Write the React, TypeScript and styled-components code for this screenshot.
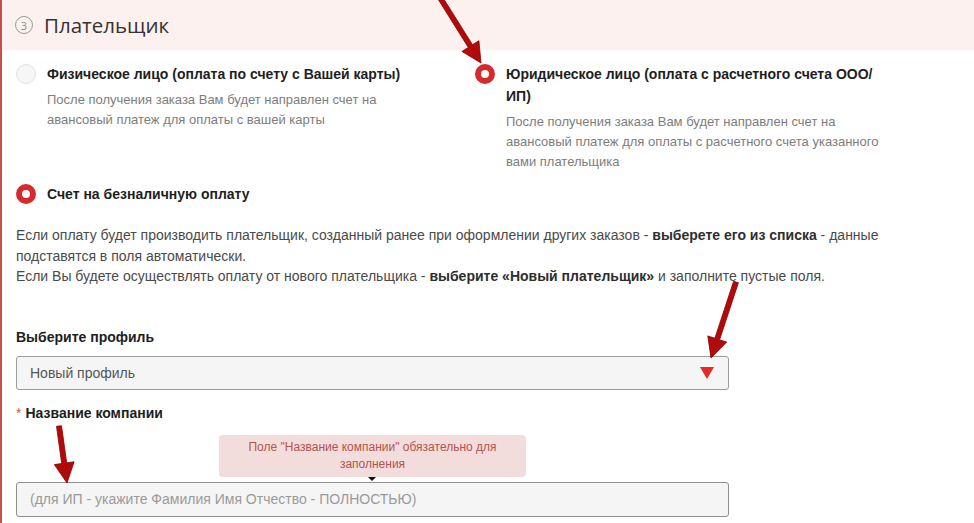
import styled, { createGlobalStyle } from 'styled-components';

const GlobalStyle = createGlobalStyle`
  * { box-sizing: border-box; }
  body {
    margin: 0;
    background: #fff;
    font-family: "Liberation Sans", Arial, sans-serif;
  }
`;

const Page = styled.div`
  position: relative;
  min-height: 523px;
  border-left: 2px solid #c4524c;
  overflow: hidden;
`;

const Header = styled.div`
  height: 50px;
  background-color: #fdf1f0;
  display: flex;
  align-items: center;
  gap: 11px;
  padding-left: 13px;
`;

const StepNumber = styled.span`
  width: 18px;
  height: 18px;
  border: 1.5px solid #9a9a9a;
  border-radius: 50%;
  display: flex;
  align-items: center;
  justify-content: center;
  font-family: "Open Sans", sans-serif;
  font-size: 11px;
  color: #8c8c8c;
  line-height: 1;
`;

const Title = styled.h2`
  margin: 0;
  font-family: "Open Sans", sans-serif;
  font-weight: 400;
  font-size: 20.5px;
  color: #333;
`;

const Content = styled.div`
  padding: 13px 14px 0 14px;
`;

const Options = styled.div`
  display: grid;
  grid-template-columns: 459px 1fr;
`;

const Option = styled.div`
  display: flex;
  align-items: flex-start;
  gap: 11px;
`;

const Radio = styled.span<{ $checked?: boolean }>`
  flex: none;
  width: 20px;
  height: 20px;
  margin-top: 1px;
  border-radius: 50%;
  background: ${(p) => (p.$checked ? '#fff' : '#f6f6f6')};
  border: ${(p) => (p.$checked ? '6px solid #d52a2e' : '1px solid #e2e2e2')};
`;

const OptionText = styled.div`
  max-width: 385px;
`;

const OptionLabel = styled.div`
  font-size: 14px;
  font-weight: 700;
  line-height: 22px;
  color: #1e1e1e;
`;

const OptionHint = styled.div`
  margin-top: 5px;
  font-size: 13px;
  line-height: 20px;
  color: #7d7d7d;
`;

const BillingOption = styled(Option)`
  margin-top: 11px;
`;

const Info = styled.p`
  margin: 20px 0 0;
  font-size: 14px;
  line-height: 20.5px;
  color: #4a4a4a;

  b {
    color: #2e2e2e;
  }
`;

const FieldLabel = styled.div<{ $gap: number }>`
  margin-top: ${(p) => p.$gap}px;
  font-size: 14px;
  font-weight: 700;
  line-height: 20px;
  color: #1e1e1e;
`;

const Required = styled.span`
  color: #d9534f;
  font-weight: 400;
  margin-right: 4px;
`;

const Select = styled.div`
  margin-top: 9px;
  width: 713px;
  height: 34px;
  border: 1px solid #9c9c9c;
  border-radius: 3px;
  background: #f5f5f5;
  display: flex;
  align-items: center;
  justify-content: space-between;
  padding: 0 14px 0 13px;
  font-size: 14px;
  color: #555;
`;

const Caret = styled.span`
  width: 0;
  height: 0;
  border-left: 7px solid transparent;
  border-right: 7px solid transparent;
  border-top: 12px solid #e32a2a;
`;

const TooltipRow = styled.div`
  width: 713px;
  margin-top: 12px;
  display: flex;
  justify-content: center;
`;

const Tooltip = styled.div`
  position: relative;
  width: 307px;
  height: 42px;
  background: #f3dcdc;
  border-radius: 4px;
  padding-top: 4px;
  font-size: 12px;
  line-height: 17px;
  color: #b5534f;
  text-align: center;

  &::after {
    content: '';
    position: absolute;
    left: 149px;
    bottom: -4px;
    border-left: 4px solid transparent;
    border-right: 4px solid transparent;
    border-top: 4px solid #111;
  }
`;

const Input = styled.div`
  margin-top: 5px;
  width: 713px;
  height: 35px;
  border: 1px solid #8e8e8e;
  border-radius: 3px;
  background: #f5f5f5;
  display: flex;
  align-items: center;
  padding-left: 13px;
  font-size: 14px;
  color: #9a9a9a;
`;

const Annotations = styled.svg`
  position: absolute;
  inset: 0;
  width: 100%;
  height: 100%;
  pointer-events: none;
`;

function arrowPath(x1: number, y1: number, x2: number, y2: number) {
  const dx = x2 - x1;
  const dy = y2 - y1;
  const len = Math.hypot(dx, dy);
  const ux = dx / len;
  const uy = dy / len;
  const nx = -uy;
  const ny = ux;
  const shaft = 2.5;
  const headLen = 20;
  const headW = 10;
  const bx = x2 - ux * headLen;
  const by = y2 - uy * headLen;
  const pts = [
    [x1 + nx * shaft, y1 + ny * shaft],
    [bx + nx * shaft, by + ny * shaft],
    [bx + nx * headW, by + ny * headW],
    [x2, y2],
    [bx - nx * headW, by - ny * headW],
    [bx - nx * shaft, by - ny * shaft],
    [x1 - nx * shaft, y1 - ny * shaft],
  ];
  return 'M' + pts.map((p) => `${p[0].toFixed(1)} ${p[1].toFixed(1)}`).join(' L') + ' Z';
}

const arrows = [
  [437, -4, 479, 63],
  [734, 282, 709, 358],
  [57, 426, 65, 483],
];

export default function App() {
  return (
    <>
      <GlobalStyle />
      <Page>
        <Header>
          <StepNumber>3</StepNumber>
          <Title>Плательщик</Title>
        </Header>
        <Content>
          <Options>
            <Option>
              <Radio />
              <OptionText>
                <OptionLabel>Физическое лицо (оплата по счету с Вашей карты)</OptionLabel>
                <OptionHint>
                  После получения заказа Вам будет направлен счет на авансовый платеж для оплаты с
                  вашей карты
                </OptionHint>
              </OptionText>
            </Option>
            <Option>
              <Radio $checked />
              <OptionText>
                <OptionLabel>
                  Юридическое лицо (оплата с расчетного счета ООО/<wbr />ИП)
                </OptionLabel>
                <OptionHint>
                  После получения заказа Вам будет направлен счет на авансовый платеж для оплаты с
                  расчетного счета указанного вами плательщика
                </OptionHint>
              </OptionText>
            </Option>
          </Options>
          <BillingOption>
            <Radio $checked />
            <OptionLabel>Счет на безналичную оплату</OptionLabel>
          </BillingOption>
          <Info>
            Если оплату будет производить плательщик, созданный ранее при оформлении других заказов -{' '}
            <b>выберете его из списка</b> - данные подставятся в поля автоматически.
            <br />
            Если Вы будете осуществлять оплату от нового плательщика -{' '}
            <b>выберите «Новый плательщик»</b> и заполните пустые поля.
          </Info>
          <FieldLabel $gap={40}>Выберите профиль</FieldLabel>
          <Select>
            <span>Новый профиль</span>
            <Caret />
          </Select>
          <FieldLabel $gap={13}>
            <Required>*</Required>Название компании
          </FieldLabel>
          <TooltipRow>
            <Tooltip>
              Поле "Название компании" обязательно для
              <br />
              заполнения
            </Tooltip>
          </TooltipRow>
          <Input>(для ИП - укажите Фамилия Имя Отчество - ПОЛНОСТЬЮ)</Input>
        </Content>
        <Annotations>
          {arrows.map(([x1, y1, x2, y2], i) => (
            <path key={i} d={arrowPath(x1, y1, x2, y2)} fill="#b00a0a" stroke="#8a0000" strokeWidth="0.8" />
          ))}
        </Annotations>
      </Page>
    </>
  );
}
